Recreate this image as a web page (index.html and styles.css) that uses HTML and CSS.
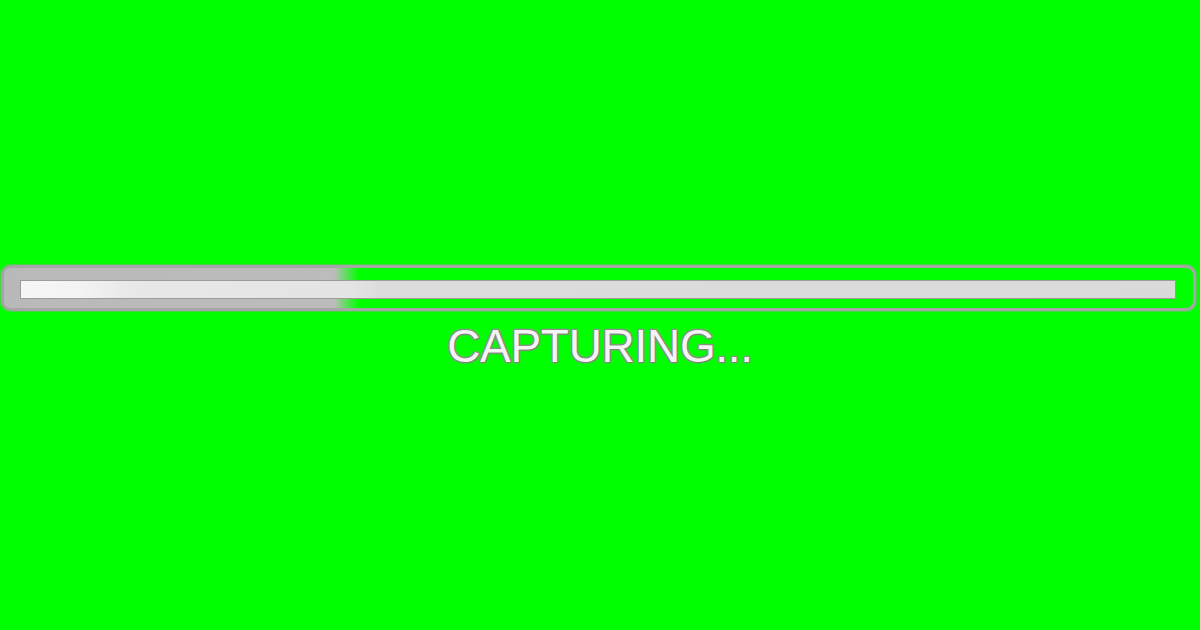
FILE: index.html
```html
<!DOCTYPE html>
<html>
<head>
<meta charset="utf-8">
<link rel="stylesheet" href="styles.css">
</head>
<body>
<main class="screen">
  <div class="frame">
    <div class="bar"></div>
  </div>
  <div class="label">CAPTURING...</div>
</main>
</body>
</html>
```
FILE: styles.css
```css
html, body {
  margin: 0;
  padding: 0;
  background: #00ff00;
}
.screen {
  width: 1200px;
  height: 630px;
  display: flex;
  flex-direction: column;
  align-items: flex-start;
  padding-top: 265px;
  box-sizing: border-box;
}
.frame {
  margin-left: 1px;
  width: 1195px;
  height: 46px;
  box-sizing: border-box;
  border: 3px solid #a6a6a6;
  border-radius: 10px;
  padding: 12px 17px 0 16px;
  background: linear-gradient(to right, #b9b9b9 0, #bcbcbc 330px, rgba(188,188,188,0) 355px, rgba(0,0,0,0) 100%);
  box-shadow: 0 0 1px 1px rgba(160,160,160,0.5);
}
.bar {
  height: 19px;
  box-sizing: border-box;
  border: 1px solid #9c9c9c;
  background: linear-gradient(to right, #f6f6f6 0, #f3f3f3 60px, #e8e8e8 110px, #e4e4e4 330px, #dcdcdc 360px, #dadada 100%);
}
.label {
  align-self: center;
  margin-top: 12px;
  font-family: "Liberation Sans", Arial, sans-serif;
  font-size: 46px;
  line-height: 46px;
  letter-spacing: -0.3px;
  color: #f4f4f4;
  text-shadow: 0 0 1px #6f6f6f, 1px 1px 1px #7f7f7f, -1px -1px 1px #8f8f8f, 1px -1px 1px #8f8f8f, -1px 1px 1px #8f8f8f, 0 0 3px #9a9a9a;
}
```
